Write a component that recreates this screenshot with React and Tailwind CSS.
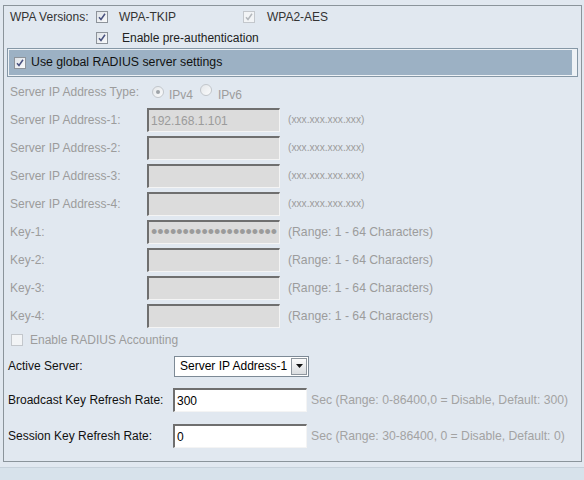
import React from "react";

const Check = ({ checked = true, disabled = false }) => (
  <span
    className={`inline-flex items-center justify-center w-[12px] h-[12px] border ${
      disabled
        ? "border-[#c3c7cc] bg-[#f2f4f6]"
        : "border-[#8d939a] bg-gradient-to-br from-[#dfe3e8] to-[#f9fafb]"
    }`}
  >
    {checked && (
      <svg width="8" height="8" viewBox="0 0 8 8">
        <path
          d="M1 4.2 L3 6.5 L7 0.8"
          fill="none"
          stroke={disabled ? "#b4b8bd" : "#4a5380"}
          strokeWidth="1.5"
        />
      </svg>
    )}
  </span>
);

const Radio = ({ checked }) => (
  <span className="inline-flex items-center justify-center w-[12px] h-[12px] rounded-full border border-[#c2c6cb] bg-gradient-to-br from-[#e4e7ea] to-[#fafbfc]">
    {checked && <span className="w-[4px] h-[4px] rounded-full bg-[#9ea3a8]" />}
  </span>
);

const GreyInput = ({ value, type = "text" }) => (
  <input
    type={type}
    disabled
    readOnly
    value={value || ""}
    className={`w-[133px] h-[24px] bg-[#dcdcdc] border-t-2 border-l-2 border-r border-b border-t-[#6f6f6f] border-l-[#6f6f6f] border-r-[#f4f4f4] border-b-[#f4f4f4] px-[2px] text-[#9b9b9b] outline-none ${
      type === "password" ? "text-[18px]" : "text-[12px]"
    }`}
  />
);

const WhiteInput = ({ value }) => (
  <input
    type="text"
    readOnly
    value={value}
    className="w-[134px] h-[24px] bg-white border-t-2 border-l-2 border-r border-b border-t-[#6f6f6f] border-l-[#6f6f6f] border-r-[#f4f4f4] border-b-[#f4f4f4] px-[2px] text-[12px] text-black outline-none"
  />
);

const ipRows = [
  { label: "Server IP Address-1:", value: "192.168.1.101" },
  { label: "Server IP Address-2:" },
  { label: "Server IP Address-3:" },
  { label: "Server IP Address-4:" },
];

const keyRows = ["Key-1:", "Key-2:", "Key-3:", "Key-4:"];

export default function App() {
  return (
    <div className="w-[584px] h-[480px] overflow-hidden bg-[#e1e8f0] font-['Liberation_Sans',Arial,sans-serif] flex flex-col">
      <div className="ml-[3px] mt-[5px] w-[579px] h-[457px] border border-[#8b949b] flex flex-col">
        {/* WPA versions */}
        <div className="h-[21px] flex items-center text-[12px] text-[#333]">
          <span className="pl-[6px] w-[92px]">WPA Versions:</span>
          <Check />
          <span className="ml-[11px] w-[124px]">WPA-TKIP</span>
          <Check disabled />
          <span className="ml-[12px]">WPA2-AES</span>
        </div>
        <div className="h-[21px] flex items-center text-[12px] text-[#222]">
          <span className="w-[92px]" />
          <Check />
          <span className="ml-[14px]">Enable pre-authentication</span>
        </div>

        {/* RADIUS bar */}
        <div className="mx-[3px] h-[29px] border border-[#8597a6] p-px bg-[#eef2f6]">
          <div className="h-full mr-[4px] bg-[#9cb1c4] flex items-center pl-[5px]">
            <Check />
            <span className="ml-[5px] text-[12.3px] text-[#111]">
              Use global RADIUS server settings
            </span>
          </div>
        </div>

        {/* server settings (disabled) */}
        <div className="text-[12px] text-[#9c9c9c]">
          <div className="h-[29px] flex items-center pl-[6px]">
            <span className="w-[142px]">Server IP Address Type:</span>
            <Radio checked />
            <span className="ml-[5px] mt-[7px]">IPv4</span>
            <span className="ml-[7px]">
              <Radio />
            </span>
            <span className="ml-[6px] mt-[7px]">IPv6</span>
          </div>
          {ipRows.map((row) => (
            <div key={row.label} className="h-[28px] flex items-center pl-[6px]">
              <span className="w-[137px]">{row.label}</span>
              <GreyInput value={row.value} />
              <span className="ml-[8px] text-[10.2px]">(xxx.xxx.xxx.xxx)</span>
            </div>
          ))}
          {keyRows.map((label, i) => (
            <div key={label} className="h-[28px] flex items-center pl-[6px]">
              <span className="w-[137px]">{label}</span>
              <GreyInput
                type={i === 0 ? "password" : "text"}
                value={i === 0 ? "secretkeyvalue123456789abc" : ""}
              />
              <span className="ml-[8px] text-[12.2px]">
                (Range: 1 - 64 Characters)
              </span>
            </div>
          ))}
          <div className="h-[20px] flex items-center pl-[7px]">
            <Check checked={false} disabled />
            <span className="ml-[7px]">Enable RADIUS Accounting</span>
          </div>
        </div>

        {/* active server */}
        <div className="h-[32px] flex items-center pl-[4px] text-[12px] text-[#111]">
          <span className="w-[166px]">Active Server:</span>
          <div className="w-[135px] h-[21px] bg-white border border-[#7d8a96] flex items-center justify-between pl-[5px] pr-px">
            <span className="text-[12px] text-black">Server IP Address-1</span>
            <span className="w-[16px] h-[17px] border border-[#8e969e] bg-gradient-to-b from-[#fbfbfb] to-[#dadde0] flex items-center justify-center">
              <svg width="7" height="4" viewBox="0 0 7 4">
                <path d="M0 0 H7 L3.5 4 Z" fill="#111" />
              </svg>
            </span>
          </div>
        </div>

        <div className="h-[36px] flex items-center pl-[4px] text-[12px] text-[#111]">
          <span className="w-[165px]">Broadcast Key Refresh Rate:</span>
          <WhiteInput value="300" />
          <span className="ml-[4px] text-[#a3a3a3] text-[12.2px]">
            Sec (Range: 0-86400,0 = Disable, Default: 300)
          </span>
        </div>
        <div className="h-[36px] flex items-center pl-[4px] text-[12px] text-[#111]">
          <span className="w-[165px]">Session Key Refresh Rate:</span>
          <WhiteInput value="0" />
          <span className="ml-[4px] text-[#a3a3a3] text-[12.2px]">
            Sec (Range: 30-86400, 0 = Disable, Default: 0)
          </span>
        </div>
      </div>
      <div className="mt-[5px] flex-1 border-t border-[#c6d1db] bg-[#d7e2eb]" />
    </div>
  );
}
